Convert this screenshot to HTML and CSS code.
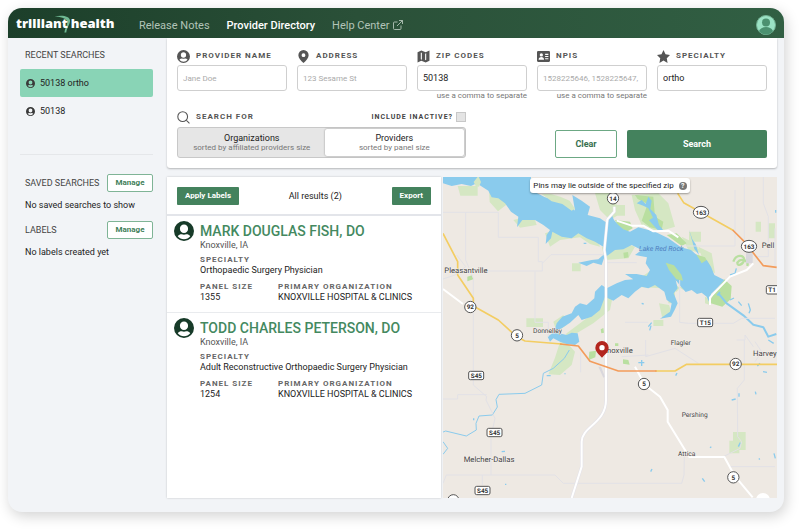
FILE: index.html
```html
<!DOCTYPE html>
<html lang="en">
<head>
<meta charset="utf-8">
<title>Trilliant Health - Provider Directory</title>
<link rel="stylesheet" href="styles.css">
</head>
<body>
<svg class="defs" aria-hidden="true">
  <symbol id="user" viewBox="0 0 24 24">
    <path fill-rule="evenodd" d="M12 0a12 12 0 1 0 0 24 12 12 0 0 0 0-24zM12 4.200c2.900 0 4.900 2 4.900 5s-2 5.200-4.900 5.200-4.900-2.200-4.900-5.200 2-5 4.900-5zM4.500 18.200c1.500-1.900 3.200-2.500 5-2.300 1.700.6 3.300.6 5 0 1.800-.2 3.500.4 5 2.300-1.900 2.300-4.500 3.600-7.500 3.600s-5.600-1.300-7.500-3.600z"/>
  </symbol>
</svg>
<div class="app">
  <header class="topbar">
    <a class="brand" href="#" aria-label="trilliant health">
      <svg class="swoosh" viewBox="0 0 54 54" aria-hidden="true"><path fill="#6fb893" d="M2 4C20-3 50 0 51 16c0 13-10 21-12 38h-6c2-14 7-20 9-30C44 12 27 3 2 4z"/></svg>
      <span>trilliant</span><span class="brand-end">health</span>
    </a>
    <nav class="nav">
      <a href="#">Release Notes</a>
      <a class="active" href="#">Provider Directory</a>
      <a href="#">Help Center
        <svg viewBox="0 0 20 20" fill="none" stroke="currentColor" stroke-width="1.800" aria-hidden="true"><path d="M9 4H3a2 2 0 0 0-2 2v11a2 2 0 0 0 2 2h11a2 2 0 0 0 2-2v-6M12 1h7v7M19 1L8 12"/></svg></a>
    </nav>
    <button class="avatar" aria-label="Account">
      <svg viewBox="0 0 40 40" aria-hidden="true"><circle cx="20" cy="20" r="19" fill="#9be3c5" stroke="#73b294" stroke-width="2"/><circle cx="20" cy="15" r="8" fill="#4b9170"/><path fill="#4b9170" d="M6 32c3-6 8-8 14-8s11 2 14 8c-3 4-8 7-14 7s-11-3-14-7z"/></svg>
    </button>
  </header>

  <div class="body">
    <aside class="sidebar">
      <h2>RECENT SEARCHES</h2>
      <ul class="recent">
        <li><a class="selected" href="#"><svg aria-hidden="true"><use href="#user"/></svg>50138 ortho</a></li>
        <li><a href="#"><svg aria-hidden="true"><use href="#user"/></svg>50138</a></li>
      </ul>
      <section class="side-group">
        <div class="side-head"><h2>SAVED SEARCHES</h2><button class="manage">Manage</button></div>
        <p>No saved searches to show</p>
      </section>
      <section class="side-group">
        <div class="side-head"><h2>LABELS</h2><button class="manage">Manage</button></div>
        <p>No labels created yet</p>
      </section>
    </aside>

    <main class="main">
      <form class="search">
        <div class="fields">
          <div class="field">
            <label for="name"><svg aria-hidden="true"><use href="#user"/></svg>PROVIDER NAME</label>
            <input id="name" type="text" placeholder="Jane Doe">
          </div>
          <div class="field">
            <label for="address"><svg viewBox="0 0 24 24" aria-hidden="true"><path fill-rule="evenodd" d="M12 0a9.500 9.500 0 0 0-9.500 9.500C2.500 15 7 19 12 24c5-5 9.500-9 9.500-14.500A9.500 9.500 0 0 0 12 0zm0 6a3.500 3.500 0 1 1 0 7 3.500 3.500 0 0 1 0-7z"/></svg>ADDRESS</label>
            <input id="address" type="text" placeholder="123 Sesame St">
          </div>
          <div class="field">
            <label for="zip"><svg viewBox="0 0 24 24" aria-hidden="true"><path fill-rule="evenodd" d="M1 4l7-3 8 3 7-3v19l-7 3-8-3-7 3zM7 5v12l2 1V5zM15 7v12l2-1V6z"/></svg>ZIP CODES</label>
            <input id="zip" type="text" value="50138">
            <small>use a comma to separate</small>
          </div>
          <div class="field">
            <label for="npi"><svg viewBox="0 0 24 24" aria-hidden="true"><path fill-rule="evenodd" d="M2 2h20a2 2 0 0 1 2 2v16a2 2 0 0 1-2 2H2a2 2 0 0 1-2-2V4a2 2 0 0 1 2-2zM8 6a3 3 0 1 0 0 6 3 3 0 0 0 0-6zM3 18h10c0-3-2-5-5-5s-5 2-5 5zM15 7v2h6V7zM15 11v2h6v-2zM15 15v2h6v-2z"/></svg>NPIS</label>
            <input id="npi" type="text" placeholder="1528225646, 1528225647,">
            <small>use a comma to separate</small>
          </div>
          <div class="field">
            <label for="specialty"><svg viewBox="0 0 24 24" aria-hidden="true"><path d="M12 0l3.700 8 8.300 1-6 6 1.500 9L12 19.500 4.500 24 6 15 0 9l8.300-1z"/></svg>SPECIALTY</label>
            <input id="specialty" type="text" value="ortho">
          </div>
        </div>
        <div class="actions">
          <div class="target">
            <div class="target-head">
              <span class="caption"><svg viewBox="0 0 24 24" aria-hidden="true"><path fill="none" stroke="#555" stroke-width="2" d="M10.500 1.500a9 9 0 1 1 0 18 9 9 0 0 1 0-18zM17 17l6 6"/></svg>SEARCH FOR</span>
              <label class="inactive">INCLUDE INACTIVE?<input type="checkbox"></label>
            </div>
            <div class="segment">
              <button type="button">Organizations<small>sorted by affiliated providers size</small></button>
              <button type="button" class="on" aria-pressed="true">Providers<small>sorted by panel size</small></button>
            </div>
          </div>
          <button type="reset" class="clear">Clear</button>
          <button type="button" class="submit">Search</button>
        </div>
      </form>

      <div class="content">
        <section class="results">
          <div class="toolbar">
            <button>Apply Labels</button>
            <span>All results (2)</span>
            <button>Export</button>
          </div>
          <article class="provider">
            <svg aria-hidden="true"><use href="#user"/></svg>
            <div class="info">
              <h3><a href="#">MARK DOUGLAS FISH, DO</a></h3>
              <p class="place">Knoxville, IA</p>
              <dl>
                <div class="wide"><dt>SPECIALTY</dt><dd>Orthopaedic Surgery Physician</dd></div>
                <div><dt>PANEL SIZE</dt><dd>1355</dd></div>
                <div><dt>PRIMARY ORGANIZATION</dt><dd>KNOXVILLE HOSPITAL &amp; CLINICS</dd></div>
              </dl>
            </div>
          </article>
          <article class="provider">
            <svg aria-hidden="true"><use href="#user"/></svg>
            <div class="info">
              <h3><a href="#">TODD CHARLES PETERSON, DO</a></h3>
              <p class="place">Knoxville, IA</p>
              <dl>
                <div class="wide"><dt>SPECIALTY</dt><dd>Adult Reconstructive Orthopaedic Surgery Physician</dd></div>
                <div><dt>PANEL SIZE</dt><dd>1254</dd></div>
                <div><dt>PRIMARY ORGANIZATION</dt><dd>KNOXVILLE HOSPITAL &amp; CLINICS</dd></div>
              </dl>
            </div>
          </article>
        </section>

        <section class="map" aria-label="Map of results">
          <svg class="map-art" viewBox="24 21 1002 963" preserveAspectRatio="xMinYMin slice">
            <rect x="24" y="21" width="1600" height="1600" fill="#eee9e3"/>
            <!-- parks and shore vegetation -->
            <g fill="#d5e7c3">
              <path d="M68 48h60v29H76zM162 60l35-8 20 50-28 22-25-28zM235 150l60-15 10 30-50 8zM330 190l60-20 45 5 50 25 10 30-30-8-30-20-60 8-30 20zM480 70l30-5 30 10 10 60-25 15-30-30zM540 105h30v32h-30zM590 75l80-5 30 30 20 70-50 15-50-20-20-45zM411 280h26v24h-26zM500 230l60-15 40 15-20 35-70 5zM595 235l35 5 20 60-30 20-60 20-50 20-35 70-80 60-20 30 100-60 50-40 10-50 60-20 90 5 40 10 20-25-5-80zM700 270l60 30-15 60-45-30zM762 185h36v30h-36zM790 230l40 20 10 60-30-20zM740 200l40 20 20 30-40-10zM274 445h50v26h-50zM355 455l30-20 10 30-30 20zM700 360h20v40h-20zM655 450h30v18h-30zM672 400l30 5 10 30-30 10zM380 500l40 45-10 40-35 30-35-2 20-50zM810 380l20 10-5 15-15-5zM894 786h38v54h-38zM883 812h30v38h-30zM1000 160h20v45h-20zM962 155h16v30h-16z"/>
            </g>
            <g fill="#b9dfa0">
              <path d="M600 75l55 5 5 60 25 15-5 25-35-8-25-20 18-50-30-15zM540 150l45 5 8 20-18 10-25-15zM695 195l30-5 30 30-15 8zM780 252l30 10 15 25-18 15-20-20zM690 278l40 15 18 40-25 0-12-25zM838 368l30-40 22 20-3 40-25 22-40-12zM97 320l14-4 4 12-18 6zM565 248l14-2 2 16-14 3zM497 478l8-4 2 14-8 2zM463 545l20-3-2 20-20 8zM564 568l16 2 4 14-20-3zM540 520h10v8h-10z"/>
              <path fill="none" stroke="#b9dfa0" stroke-width="7" d="M895 275c8-25 35-20 32-5s-20 20-20 8c10-15 35-8 30 10"/>
            </g>
            <!-- Lake Red Rock -->
            <path fill="#8acbed" d="M24 21H288V60L330 82 400 98 420 122 412 75 440 92 465 110 458 135 495 145 515 158 528 130 537 150 550 165 565 178 585 185 610 172 660 185 700 205 738 232 768 240 785 255 800 280 815 270 828 290 838 315 868 330 850 350 828 372 824 400 815 380 800 368 786 372 770 360 752 366 738 350 722 330 728 355 716 370 728 400 720 418 708 440 675 446 705 425 710 400 695 390 688 365 660 345 640 355 620 350 600 365 580 385 560 375 535 392 510 380 495 420 470 440 440 450 430 435 405 458 380 475 368 480 372 490 395 495 410 488 428 490 433 515 420 525 395 522 375 515 355 505 345 515 338 500 358 485 365 460 382 440 410 430 420 410 435 400 455 405 478 385 480 365 500 345 515 355 545 340 570 330 595 328 570 312 605 312 635 318 645 300 632 280 636 262 600 255 620 240 590 225 565 238 540 240 520 255 508 262 500 285 475 278 455 288 430 278 470 270 490 268 510 250 505 230 480 215 455 205 430 190 410 205 380 200 352 185 348 205 332 222 335 195 345 180 325 165 300 150 262 150 246 172 250 140 228 125 210 100 190 85 170 82 160 62 125 40 108 48 80 42 50 48 24 40z"/>
            <path fill="#8acbed" d="M605 100l15-10 12 12 8-22 10 12-4 25 18 18 8 30 15 18-20-4-25-28 12-8-14-28-15-8zM762 178l10 30 10 15 10 32-14-18z"/>
            <path fill="#d5e7c3" d="M320 72l28 0 28 8 28 12 16 24-10 6-28-20-32-8zM116 36l14-18 8 18-6 14-10-2z"/>
            <path fill="#b9dfa0" d="M692 278l25 8 22 28 5 18-20-4-22-28z"/>
            <g fill="none" stroke="#8acbed" stroke-width="6" stroke-linejoin="round">
              <path d="M850 370l25 30 50 36 30 28 30 8 15 28 24-8M855 366l-8 10"/>
              <path stroke-width="3" d="M403 540l-15 25-33 30-30 15-5 35-50 25-78 3-9 16 4 22-15 24-40 3-9 22 1 20-30 18-62-15-10 4M24 815l14 20-14 18"/>
              <path stroke-width="4" d="M885 315l15-5 4-15M885 390l12-6M910 395l10 12M940 400l6 20-4 10M620 400l6 2M640 470l10-12M648 467l-4 14M610 578l18 0M620 570v18M722 617l4-8M984 605l12 2M961 665l2 8M890 690l12-3M912 670v10M910 830l6-12M825 833l4-3M647 905l4-8M802 925l7 10M1017 850l4 15M972 865l2 4M975 580l-8 8M1000 510l16 10M390 610v3M116 745v6M200 845l10-1M210 943h4M446 220h8M1022 120v8M335 617l12 0"/>
            </g>
            <!-- minor roads -->
            <g fill="none" stroke="#e2e1e6" stroke-width="3" stroke-linejoin="round">
              <path d="M24 127H190V202H310V275H322V303H160M92 127V270L115 325V645L155 680 153 690 180 745 168 800V915M24 327L60 315 92 290 65 255M322 280L348 254H508M300 305V457H340V500M515 278H605M24 687H68V674H155M24 940L34 915H360L385 940H740L747 915 748 860M142 915V945M570 457H640M734 330V457L760 460H895L920 445H1020M905 510H930V495L955 530M738 228H900V60M928 21V210M985 21V100L1000 140V260H960M1020 175V290M632 510V560L720 535 790 580M437 545V607M928 510V630L907 655 908 800 920 815 915 835 865 860M885 890H1020M640 555L560 560M960 515l20 30-20 30"/>
            </g>
            <path fill="#d9d7dc" d="M933 250h20v30h-20zM490 590l8 0 12 30-5 3z"/>
            <!-- highways -->
            <g fill="none" stroke="#fff" stroke-linejoin="round">
              <path stroke-width="9" stroke="#e2e1e9" d="M538 110V125L517 148 508 240 513 270V690C513 760 440 770 440 815V890L410 984"/>
              <path stroke-width="6" d="M538 110V125L517 148 508 240 513 270V690C513 760 440 770 440 815V890L410 984M545 152l45 15h35l30 17 45-2 30 20M825 405V382L885 320 935 300 955 280M24 357l60 45M600 590l30 55 45 35 23 40v35l65 106h105l30 55 55 66"/>
            </g>
            <g fill="none" stroke="#f3cd62" stroke-width="5" stroke-linejoin="round">
              <path d="M24 190L68 275V315L115 385V408L190 450 245 500 270 513 380 522M660 603H720L755 583H1026M728 70l18 28 50 28 98 55"/>
              <path stroke="#f39c5b" d="M375 522L430 528 465 574 550 603H665M893 180l35 35 57 72 40 5"/>
            </g>
            <!-- route shields -->
            <g class="shields">
              <circle cx="534" cy="85" r="17"/><circle cx="106" cy="411" r="17"/><circle cx="246" cy="496" r="17"/><circle cx="627" cy="642" r="17"/><circle cx="902" cy="582" r="17"/><circle cx="895" cy="922" r="17"/><circle cx="55" cy="991" r="17"/>
              <ellipse cx="798" cy="127" rx="23" ry="18"/><ellipse cx="942" cy="229" rx="23" ry="18"/>
              <rect x="788" y="445" width="45" height="25" rx="5"/><rect x="994" y="347" width="45" height="25" rx="5"/><rect x="101" y="604" width="45" height="25" rx="5"/><rect x="156" y="775" width="45" height="25" rx="5"/><rect x="120" y="949" width="45" height="25" rx="5"/>
            </g>
            <g class="routes">
              <text x="534" y="92">14</text><text x="106" y="418">92</text><text x="246" y="503">5</text><text x="627" y="649">5</text><text x="902" y="589">92</text><text x="895" y="929">5</text>
              <text x="798" y="134">163</text><text x="942" y="236">163</text><text x="811" y="465">T15</text><text x="1011" y="367">T1</text><text x="124" y="624">S45</text><text x="179" y="795">S45</text><text x="143" y="969">S45</text>
            </g>
            <g class="towns">
              <text x="28" y="310">Pleasantville</text><text x="502" y="549">Knoxville</text><text x="980" y="235">Pell</text><text x="954" y="558">Harvey</text><text x="86" y="875">Melcher-Dallas</text>
              <g class="small"><text x="294" y="490">Donnelley</text><text x="707" y="525">Flagler</text><text x="740" y="741">Pershing</text><text x="729" y="858">Attica</text></g>
            </g>
            <text class="water" x="612" y="243">Lake Red Rock</text>
            <circle cx="984" cy="990" r="21" fill="#fff"/>
            <path fill="#b3261e" d="M501 513a20 20 0 0 0-20 20c0 12 11 20 20 30 9-10 20-18 20-30a20 20 0 0 0-20-20z"/><circle cx="501" cy="533" r="8" fill="#fff"/>
          </svg>
          <p class="note">Pins may lie outside of the specified zip <button aria-label="Help">?</button></p>
        </section>
      </div>
    </main>
  </div>
</div>
</body>
</html>
```
FILE: styles.css
```css
* { box-sizing: border-box; }
body {
  margin: 0;
  padding: 8px 16px 17px 8px;
  background: #fff;
  color: #222;
  font: 9px/12px Roboto, "Liberation Sans", sans-serif;
}
h2, h3, p, ul, dl, dd { margin: 0; padding: 0; }
button, input { font: inherit; color: inherit; }
button { padding: 0; border: 0; border-radius: 2px; cursor: pointer; }
a { color: inherit; text-decoration: none; }
.defs { display: none; }

.app {
  display: flex;
  flex-direction: column;
  min-height: calc(100vh - 25px);
  overflow: hidden;
  border-radius: 14px;
  background: #f2f4f7;
  box-shadow: 2px 4px 14px rgba(0, 0, 0, .18);
}

/* Top bar */
.topbar {
  display: flex;
  align-items: center;
  height: 30px;
  padding: 0 8px;
  background: linear-gradient(90deg, #1c3f2a, #2a5038 45%, #315f43);
}
.brand {
  position: relative;
  display: flex;
  flex: 0 0 100px;
  gap: 3px;
  margin-right: 23px;
  color: #fff;
  font: 800 13px/34px "Open Sans", sans-serif;
}
.brand span { position: relative; }
.swoosh { position: absolute; left: 38px; top: 9px; width: 17px; height: 18px; }
.nav { display: flex; gap: 17px; flex: 1; color: #b2c4b8; font-size: 11px; line-height: 36px; padding-top: 6px; }
.nav .active { color: #fff; font-weight: 500; }
.nav svg { width: 10px; height: 10px; margin-left: 1px; vertical-align: -1px; }
.avatar { width: 20px; height: 20px; margin-top: 4px; background: none; }
.avatar svg { display: block; }

.body { display: flex; flex: 1; }

/* Sidebar */
.sidebar { flex: 0 0 159px; padding: 10px 14px 0 12px; }
.sidebar h2 { padding-left: 5px; color: #444; font-size: 9px; font-weight: 400; line-height: 14px; }
.recent { list-style: none; margin: 7px 0 19px; padding-bottom: 29px; border-bottom: 1px solid #e5e7ea; }
.recent a { display: flex; align-items: center; gap: 5px; height: 28px; padding-left: 6px; border-radius: 2px; }
.recent .selected { background: #89d4b6; }
.recent svg { width: 9px; height: 9px; fill: #3a3a3a; }
.side-head { display: flex; align-items: center; justify-content: space-between; }
.side-group { margin-bottom: 9px; }
.side-group p { padding: 7px 0 0 5px; line-height: 13px; }
.manage { width: 46px; height: 18px; border: 1px solid #7fb496; background: #fff; color: #3f7f5a; font-weight: 700; font-size: 8px; }

/* Search form */
.main { display: flex; flex: 1; flex-direction: column; min-width: 0; padding: 0 7px 14px 0; }
.search { padding: 11px 10px 10px; border-radius: 0 0 3px 3px; background: #fff; box-shadow: 0 1px 2px rgba(0, 0, 0, .25); }
.fields { display: grid; grid-template-columns: repeat(5, 1fr); gap: 10px; min-height: 60px; }
.field { display: flex; flex-direction: column; min-width: 0; }
.field label, .caption {
  display: flex;
  align-items: center;
  gap: 6px;
  height: 14px;
  color: #555;
  font-size: 8px;
  font-weight: 700;
  letter-spacing: 1px;
}
.field label { margin-bottom: 2px; }
.field label svg, .caption svg { width: 13px; height: 13px; fill: #555; }
.field input { width: 100%; height: 26px; padding: 0 5px; border: 1px solid #cfcfcf; border-radius: 3px; background: #fff; }
.field input::placeholder { color: #aaa; font-size: 8px; opacity: 1; }
.field small { color: #777; font-size: 8px; line-height: 10px; text-align: right; }
.actions { display: flex; align-items: flex-end; gap: 10px; }
.target { flex: 0 0 49%; margin-right: auto; }
.target-head { display: flex; align-items: center; justify-content: space-between; height: 16px; margin-bottom: 2px; }
.inactive { display: flex; align-items: center; gap: 3px; color: #444; font-size: 7px; font-weight: 700; letter-spacing: 1px; }
.inactive input { appearance: none; width: 10px; height: 10px; margin: 0; border: 1px solid #c8c8c8; background: #e4e4e4; }
.segment { display: grid; grid-template-columns: 146fr 140fr; height: 31px; border: 1px solid #c8c8c8; border-radius: 3px; background: #e6e6e6; padding: 1px; }
.segment button { background: none; font-size: 9px; line-height: 10px; }
.segment .on { background: #fff; box-shadow: 0 0 2px rgba(0, 0, 0, .4); }
.segment small { display: block; color: #777; font-size: 8px; line-height: 9px; }
.clear, .submit { height: 28px; font-size: 9px; font-weight: 700; }
.clear { flex: 0 0 62px; border: 1px solid #6ca884; background: #fff; color: #37704f; }
.submit { flex: 0 0 140px; background: #44825d; color: #fff; }

/* Results */
.content { display: grid; grid-template-columns: 274fr 334fr; gap: 2px; flex: 1; margin-top: 9px; }
.results { background: #fff; box-shadow: 0 0 2px rgba(0, 0, 0, .2); }
.toolbar { display: flex; align-items: center; justify-content: space-between; height: 39px; padding: 0 10px; border-bottom: 2px solid #e3e5ea; }
.toolbar button { height: 18px; padding: 0 8px; border-radius: 1px; background: #44825d; color: #fff; font-size: 8px; font-weight: 700; }
.provider { display: flex; gap: 6px; height: 96px; padding: 5px 7px 0; }
.provider + .provider { border-top: 1px solid #e9ebee; }
.provider > svg { flex: none; width: 20px; height: 20px; fill: #173b29; }
.info { flex: 1; }
.info h3 { color: #44895f; font-size: 14px; font-weight: 500; line-height: 20px; }
.place { color: #555; line-height: 9px; }
.info dl { display: grid; grid-template-columns: 78px 1fr; row-gap: 7px; padding-top: 5px; }
.wide { grid-column: 1 / -1; }
.info dt { color: #666; font-size: 8px; font-weight: 700; letter-spacing: 1px; line-height: 10px; }
.info dd { line-height: 10px; }

/* Map */
.map { position: relative; overflow: hidden; background: #eee9e3; }
.map-art { position: absolute; inset: 0; width: 100%; height: 100%; text-rendering: geometricPrecision; }
.note {
  position: relative;
  display: flex;
  align-items: center;
  gap: 5px;
  width: max-content;
  height: 15px;
  margin: 1px auto 0;
  padding: 0 3px;
  border-radius: 3px;
  background: #fff;
  box-shadow: 0 1px 2px rgba(0, 0, 0, .35);
  font-size: 8px;
}
.note button { width: 8px; height: 8px; border-radius: 50%; background: #777; color: #fff; font-size: 7px; font-weight: 700; line-height: 8px; }
.shields { fill: #fff; stroke: #555; stroke-width: 3px; }
.routes { fill: #333; font-size: 19px; font-weight: 700; text-anchor: middle; }
.towns { fill: #444; stroke: #f4f0ec; stroke-width: 3px; paint-order: stroke; font-size: 23px; }
.towns .small { font-size: 20px; }
.water { fill: #4f7fc0; font-size: 21px; font-style: italic; }
```
